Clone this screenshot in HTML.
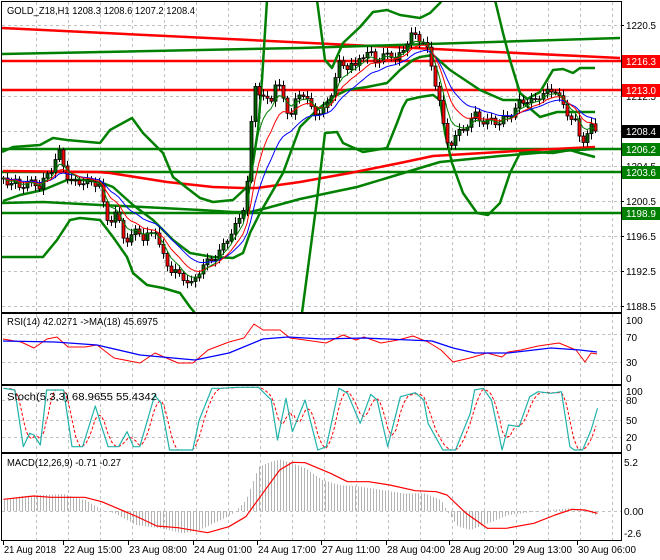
<!DOCTYPE html>
<html><head><meta charset="utf-8">
<style>
html,body{margin:0;padding:0;background:#fff;}
body{width:660px;height:560px;overflow:hidden;position:relative;font-family:"Liberation Sans",sans-serif;}
svg{position:absolute;left:0;top:0;}
</style></head>
<body>
<svg id="c" width="660" height="560" viewBox="0 0 660 560" font-family="Liberation Sans, sans-serif" font-size="10">
<defs>
<clipPath id="cm"><rect x="2" y="2" width="619" height="310"/></clipPath>
<clipPath id="cr"><rect x="2" y="313" width="619" height="71"/></clipPath>
<clipPath id="cs"><rect x="2" y="386" width="619" height="66"/></clipPath>
<clipPath id="cd"><rect x="2" y="454" width="619" height="86"/></clipPath>
</defs>
<g id="grid"></g>
<g id="main" clip-path="url(#cm)"></g>
<g id="rsi" clip-path="url(#cr)"></g>
<g id="sto" clip-path="url(#cs)"></g>
<g id="macd" clip-path="url(#cd)"></g>
<g id="frames" fill="none" stroke="#000" stroke-width="1">
<rect x="1.5" y="1.5" width="620" height="311"/>
<rect x="1.5" y="313.5" width="620" height="71"/>
<rect x="1.5" y="385.5" width="620" height="67"/>
<rect x="1.5" y="453.5" width="620" height="87"/>
</g>
<g id="axis"></g>
<text x="7" y="14" fill="#000" textLength="188" lengthAdjust="spacingAndGlyphs">GOLD_Z18,H1  1208.3 1208.6 1207.2 1208.4</text>
<text x="7" y="325" fill="#000" textLength="151" lengthAdjust="spacingAndGlyphs">RSI(14) 42.0271  -&gt;MA(18) 45.6975</text>
<text x="7" y="400" fill="#000" textLength="150" lengthAdjust="spacingAndGlyphs">Stoch(5,3,3) 68.9655 55.4342</text>
<text x="7" y="466" fill="#000" textLength="114" lengthAdjust="spacingAndGlyphs">MACD(12,26,9) -0.71 -0.27</text>
</svg>
<script>
const S='http://www.w3.org/2000/svg';
function el(p,t,a){const e=document.createElementNS(S,t);for(const k in a)e.setAttribute(k,a[k]);p.appendChild(e);return e;}
function pl(p,pts,col,w,dash){const a={points:pts.map(q=>q[0].toFixed(1)+','+q[1].toFixed(1)).join(' '),fill:'none',stroke:col,'stroke-width':w,'stroke-linejoin':'round'};if(dash)a['stroke-dasharray']=dash;return el(p,'polyline',a);}
function interp(P,x){if(x<=P[0][0])return P[0][1];for(let i=1;i<P.length;i++){if(x<=P[i][0]){const a=P[i-1],b=P[i];return a[1]+(b[1]-a[1])*(x-a[0])/(b[0]-a[0]);}}return P[P.length-1][1];}
const G=document.getElementById('grid'),M=document.getElementById('main'),R=document.getElementById('rsi'),ST=document.getElementById('sto'),D=document.getElementById('macd'),A=document.getElementById('axis');
for(let k=1;k<=19;k++){const x=4.5+32*k;[[2,312],[314,384],[386,452],[454,540]].forEach(r=>el(G,'line',{x1:x,x2:x,y1:r[0],y2:r[1],stroke:'#c0c0c0','stroke-dasharray':'3,3'}));}
[25,60,96,131,166,201,236,271,306].forEach(y=>el(G,'line',{x1:2,x2:621,y1:y+.5,y2:y+.5,stroke:'#c0c0c0','stroke-dasharray':'3,3'}));
[334,362].forEach(y=>el(G,'line',{x1:2,x2:621,y1:y+.5,y2:y+.5,stroke:'#c0c0c0','stroke-dasharray':'3,3'}));
[400,420,437].forEach(y=>el(G,'line',{x1:2,x2:621,y1:y+.5,y2:y+.5,stroke:'#c0c0c0','stroke-dasharray':'3,3'}));
el(G,'line',{x1:2,x2:621,y1:511.5,y2:511.5,stroke:'#c0c0c0','stroke-dasharray':'3,3'});

pl(M,[[2,28],[620,58]],'#ff0000',2.5);
pl(M,[[2,54],[300,48],[620,38]],'#008000',2.5);
[[61,'#ff0000'],[90,'#ff0000'],[149,'#008000'],[172,'#008000'],[213,'#008000']].forEach(h=>el(M,'line',{x1:2,x2:621,y1:h[0],y2:h[0],stroke:h[1],'stroke-width':2.5}));
pl(M,[[3,171],[97,172],[110,173],[167,182],[213,187],[243,188],[257,188],[300,182],[350,173],[400,163],[433,156],[483,153],[533,150],[595,147]],'#ff0000',2.5);
pl(M,[[2,203],[43,202],[100,205],[143,207],[200,210],[233,212],[250,212],[267,208],[300,199],[333,192],[357,187],[387,178],[420,168],[440,162],[500,156],[560,151],[595,149]],'#008000',2.5);
const bands=[
[[2,152],[13,147],[40,145],[53,138],[67,140],[100,143],[110,130],[132,118],[143,133],[163,153],[173,177],[187,188],[200,198],[213,202],[233,200],[247,187],[253,163],[258,130],[262,80],[267,0]],
[[317,0],[325,60],[332,68],[343,43],[360,27],[373,12],[387,10],[400,15],[420,18],[430,13],[440,3],[442,0]],
[[495,0],[503,33],[510,60],[520,93],[527,99],[540,92],[553,70],[563,69],[573,73],[580,68],[595,68]],
[[2,257],[43,257],[57,240],[70,220],[80,218],[100,220],[113,237],[127,257],[133,273],[147,285],[163,288],[180,293],[190,307],[195,313]],
[[302,313],[317,200],[325,133],[337,132],[343,143],[363,152],[387,148],[397,123],[403,107],[407,100],[420,97],[433,95],[440,100],[445,133],[452,163],[463,193],[477,213],[488,215],[500,203],[510,173],[520,153],[533,152],[553,153],[570,150],[580,153],[595,157]],
[[3,201],[20,195],[43,190],[55,185],[67,180],[83,180],[100,182],[113,187],[133,205],[153,220],[173,240],[190,253],[213,257],[233,258],[243,253],[250,233],[260,213],[283,173],[300,127],[317,110],[333,97],[347,90],[367,87],[387,83],[400,70],[413,60],[420,57],[433,55],[450,70],[480,90],[503,100],[520,100],[540,117],[557,112],[595,112]]
];
bands.forEach(b=>pl(M,b,'#008000',2.5));

const P=[[3,178],[10,183],[15,180],[20,186],[27,185],[33,183],[40,190],[45,175],[50,170],[55,158],[60,150],[63,165],[67,178],[72,185],[80,183],[90,180],[100,183],[103,205],[108,225],[112,220],[117,212],[120,230],[125,240],[130,237],[137,225],[143,240],[150,235],[155,232],[160,250],[165,260],[170,268],[175,270],[180,275],[185,280],[190,288],[195,280],[200,270],[205,262],[210,258],[215,255],[220,250],[227,240],[233,232],[240,218],[245,200],[250,150],[252,95],[256,80],[260,95],[265,100],[270,105],[275,85],[280,90],[285,105],[290,115],[295,100],[300,92],[305,95],[310,110],[315,115],[320,112],[325,108],[330,95],[335,75],[340,60],[345,70],[350,65],[355,70],[360,55],[365,55],[370,50],[375,58],[380,60],[385,55],[390,55],[395,62],[400,55],[405,45],[410,32],[415,35],[420,40],[425,42],[430,65],[435,85],[440,105],[445,140],[450,142],[455,135],[460,130],[465,128],[470,125],[475,115],[480,120],[485,125],[490,115],[495,120],[500,125],[505,115],[510,118],[515,112],[520,100],[530,100],[540,95],[550,93],[555,92],[560,100],[565,110],[570,115],[575,120],[580,140],[585,140],[590,128],[595,132]];
let prev=178;const C=[];const X=[];
const cg=el(M,'g',{});
for(let i=0;;i++){const x=3+4*i;if(x>597)break;
 let c=interp(P,x)+3*Math.sin(i*1.7)+2*Math.sin(i*0.63);
 if(x>=595)c=131;
 const o=prev;const top=Math.min(o,c),bot=Math.max(o,c);
 const hi=top-(2+4*Math.abs(Math.sin(i*2.3))),lo=bot+(2+4*Math.abs(Math.cos(i*1.9)));
 el(cg,'line',{x1:x+.5,x2:x+.5,y1:hi,y2:lo,stroke:'#000','stroke-width':1});
 const h=Math.max(bot-top,1);
 el(cg,'rect',{x:x-1,y:top,width:3,height:h,fill:(c<o)?'#006400':'#ff0000',stroke:'#000','stroke-width':0.8});
 C.push(c);X.push(x);prev=c;}
function ema(n){const k=2/(n+1);let v=C[0];return C.map((c,i)=>{v=i?v+k*(c-v):c;return [X[i],v];});}
pl(M,ema(15),'#0000ff',1);
pl(M,ema(9),'#ff0000',1);
pl(M,ema(5),'#008000',1);

pl(R,[[3,339],[21,342],[34,348],[47,339],[57,337],[68,347],[85,347],[97,345],[114,358],[140,363],[155,353],[178,363],[193,363],[208,350],[229,342],[244,338],[254,324],[263,330],[280,330],[290,338],[305,340],[326,343],[343,335],[356,340],[364,337],[381,343],[398,340],[413,336],[428,342],[441,350],[453,362],[470,358],[487,353],[502,357],[508,352],[521,350],[538,346],[559,343],[576,350],[585,362],[591,353],[597,354]],'#ff0000',1);
pl(R,[[3,341],[55,342],[97,345],[140,355],[195,360],[229,353],[263,339],[288,337],[322,339],[364,338],[432,341],[453,348],[475,353],[508,353],[551,348],[580,350],[597,352]],'#0000ff',1.3);

const T=[[8,265],[35,270],[55,440],[70,400],[80,405],[95,435],[110,270],[140,270],[150,270],[170,440],[195,440],[225,318],[240,380],[255,440],[280,440],[300,395],[315,440],[330,440],[365,285],[380,310],[400,450],[440,450],[455,450],[470,360],[500,265],[520,265],[560,262],[610,262],[640,300],[655,420],[675,295],[690,395],[720,300],[750,450],[770,440],[800,265],[820,280],[850,370],[875,283],[890,300],[915,440],[945,290],[980,278],[1000,300],[1010,370],[1045,450],[1075,450],[1110,340],[1120,270],[1140,265],[1160,300],[1185,450],[1200,375],[1225,380],[1250,290],[1270,275],[1300,280],[1325,275],[1345,440],[1355,450],[1375,450],[1395,390],[1410,325]].map(p=>[p[0]/2.36,Math.min(451,p[1]/3+300)]);
const red=[];for(let x=4;x<=597;x+=2){red.push([x,(interp(T,x)+interp(T,x-4)+interp(T,x-8))/3]);}
pl(ST,red,'#ff0000',1,'3,2');
pl(ST,T,'#20b2aa',1.2);

const H=[[8,600],[50,588],[100,585],[150,582],[200,600],[240,630],[270,640],[320,675],[380,685],[430,700],[470,690],[520,660],[550,640],[580,600],[610,500],[640,485],[660,478],[690,490],[720,505],[760,540],[800,555],[850,560],[900,570],[950,580],[1000,580],[1040,600],[1055,635],[1080,680],[1110,690],[1150,670],[1200,645],[1260,635],[1300,630],[1340,625],[1380,630],[1410,650]].map(p=>[p[0]/2.36,p[1]/3+300]);
for(let x=4;x<=597;x+=3){const y=interp(H,x);el(D,'line',{x1:x+.5,x2:x+.5,y1:511,y2:y,stroke:'#b4b4b4','stroke-width':1});}
pl(D,[[8,598],[80,588],[120,592],[200,592],[240,605],[320,648],[370,678],[420,683],[490,698],[540,680],[580,650],[620,580],[660,510],[690,487],[720,488],[780,520],[820,545],[870,545],[920,555],[980,572],[1030,575],[1055,585],[1100,640],[1150,685],[1195,685],[1260,670],[1310,645],[1350,628],[1380,630],[1410,640]].map(p=>[p[0]/2.36,p[1]/3+300]),'#ff0000',1.2);

function tx(x,y,s,col,len){const a={x:x,y:y,fill:col||'#000'};if(len){a.textLength=len;a.lengthAdjust='spacingAndGlyphs';}const t=el(A,'text',a);t.textContent=s;return t;}
[[25,'1220.5'],[96,'1212.5'],[166,'1204.5'],[201,'1200.5'],[236,'1196.5'],[271,'1192.5'],[306,'1188.5']].forEach(a=>{el(A,'line',{x1:621,x2:624,y1:a[0]+.5,y2:a[0]+.5,stroke:'#000'});tx(626,a[0]+4,a[1],'#000',30);});
[[61,'1216.3','#ff0000'],[90,'1213.0','#ff0000'],[131,'1208.4','#000000'],[149,'1206.2','#008000'],[172,'1203.6','#008000'],[213,'1198.9','#008000']].forEach(b=>{el(A,'rect',{x:622,y:b[0]-6,width:38,height:13,fill:b[2]});tx(626,b[0]+4,b[1],'#fff',30);});
[[320,'100'],[337,'70'],[362,'30'],[378,'0']].forEach(a=>tx(626,a[0]+4,a[1]));
[[391,'100'],[400,'80'],[420,'50'],[437,'20'],[447,'0']].forEach(a=>tx(626,a[0]+4,a[1]));
[[462,'5.2'],[511,'0.00'],[533,'-2.6']].forEach(a=>tx(624,a[0]+4,a[1]));
[[3,'21 Aug 2018',52],[63,'22 Aug 15:00',58],[128,'23 Aug 08:00',58],[193,'24 Aug 01:00',58],[257,'24 Aug 17:00',58],[321,'27 Aug 11:00',58],[386,'28 Aug 04:00',58],[449,'28 Aug 20:00',58],[513,'29 Aug 13:00',58],[577,'30 Aug 06:00',58]].forEach(a=>{el(A,'line',{x1:a[0]+.5,x2:a[0]+.5,y1:541,y2:545,stroke:'#000'});tx(a[0]+1,553,a[1],'#000',a[2]);});
</script>
</body></html>
